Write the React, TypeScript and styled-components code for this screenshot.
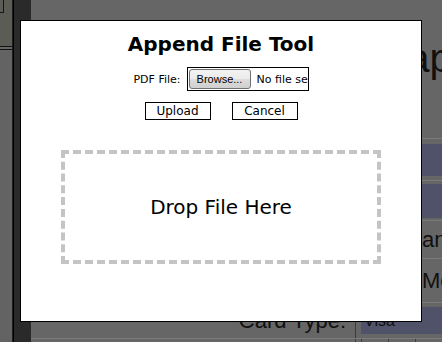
import React from "react";
import styled, { createGlobalStyle } from "styled-components";

// Style
const GlobalStyle = createGlobalStyle`
  html, body {
    margin: 0;
    padding: 0;
    width: 100%;
    height: 100%;
    overflow: hidden;
    background-color: #666666;
  }
  #root {
    height: 100%;
  }
`;

const Page = styled.div`
  display: flex;
  height: 100vh;
  overflow: hidden;
`;

const LeftPanel = styled.div`
  width: 12px;
  display: flex;
  flex-direction: column;
  border-right: 1px solid #1e1e1e;
  flex-shrink: 0;
`;

const PanelTop = styled.div`
  height: 46px;
  background-color: #5c5c57;
  border-bottom: 1px solid #111111;
`;

const PanelTab = styled.div`
  width: 3px;
  height: 12px;
  border-right: 1px solid #151515;
  border-bottom: 1px solid #151515;
`;

const PanelBottom = styled.div`
  flex: 1;
  margin-top: 2px;
  background-color: #636363;
  border-top: 1px solid #111111;
`;

const SideBar = styled.div`
  width: 17px;
  flex-shrink: 0;
  background-color: #2a2a2a;
  border-left: 1px solid #000000;
`;

const Main = styled.div`
  flex: 1;
  min-width: 0;
  overflow: hidden;
  padding-top: 36px;
  font-family: "Liberation Sans", Arial, sans-serif;
  color: #111111;
`;

const Heading = styled.h1`
  margin: 0;
  padding-left: 305px;
  height: 46px;
  font-size: 40px;
  font-weight: normal;
  white-space: nowrap;
`;

const Form = styled.div`
  margin-top: 56px;
`;

const Row = styled.div<{ $h: number }>`
  display: grid;
  grid-template-columns: 324px 1fr;
  height: ${(p) => p.$h}px;
  border-top: 1px solid #7a7a7a;
  box-sizing: border-box;
`;

const Label = styled.div`
  display: flex;
  align-items: center;
  justify-content: flex-end;
  padding-right: 9px;
  font-size: 22px;
  white-space: nowrap;
`;

const Cell = styled.div`
  display: flex;
  align-items: center;
  padding-left: 5px;
  border-left: 1px solid #3c3c3c;
  white-space: nowrap;
  overflow: hidden;
`;

const Field = styled.div<{ $h: number }>`
  flex: 1;
  height: ${(p) => p.$h}px;
  background-color: #50526a;
  font-size: 16px;
  padding-left: 3px;
  display: flex;
  align-items: center;
`;

const Note = styled.span`
  padding-left: 61px;
  font-size: 22px;
`;

const MiniBox = styled.div`
  width: 26px;
  height: 100%;
  border-left: 1px solid #3c3c3c;
`;

const Overlay = styled.div`
  position: fixed;
  inset: 0;
  display: flex;
  align-items: center;
  justify-content: center;
`;

const Dialog = styled.div`
  width: 400px;
  height: 300px;
  background-color: #ffffff;
  border: 1px solid #000000;
  display: flex;
  flex-direction: column;
  align-items: center;
  font-family: "DejaVu Sans", Verdana, sans-serif;
  color: #000000;
`;

const Title = styled.h2`
  margin: 12px 0 0;
  font-size: 20px;
  line-height: 23px;
  font-weight: bold;
`;

const FileRow = styled.div`
  margin-top: 11px;
  display: flex;
  align-items: center;
  gap: 6px;
  font-size: 11px;
`;

const FileBox = styled.div`
  width: 122px;
  height: 24px;
  box-sizing: border-box;
  border: 1px solid #000000;
  padding: 1px;
  display: flex;
  align-items: center;
  gap: 6px;
  overflow: hidden;
  white-space: nowrap;
`;

const Browse = styled.div`
  flex-shrink: 0;
  width: 62px;
  height: 20px;
  box-sizing: border-box;
  border: 1px solid #707070;
  border-radius: 3px;
  background: linear-gradient(#f2f2f2, #ebebeb 50%, #dddddd 50%, #cfcfcf);
  font-family: "Liberation Sans", Arial, sans-serif;
  font-size: 11px;
  display: flex;
  align-items: center;
  justify-content: center;
`;

const ButtonRow = styled.div`
  margin-top: 11px;
  display: flex;
  gap: 21px;
`;

const Button = styled.button`
  width: 66px;
  height: 18px;
  padding: 0;
  border: 1px solid #000000;
  background-color: #ffffff;
  font-family: "DejaVu Sans", Verdana, sans-serif;
  font-size: 12px;
  line-height: 16px;
  color: #000000;
`;

const DropZone = styled.div`
  margin-top: 30px;
  width: 320px;
  height: 114px;
  box-sizing: border-box;
  border: 4px dashed #c4c4c4;
  display: flex;
  align-items: center;
  justify-content: center;
  font-size: 20px;
`;

function App() {
  return (
    <>
      <GlobalStyle />
      <Page>
        <LeftPanel>
          <PanelTop>
            <PanelTab />
          </PanelTop>
          <PanelBottom />
        </LeftPanel>
        <SideBar />
        <Main>
          <Heading>Recap</Heading>
          <Form>
            <Row $h={42}>
              <Label />
              <Cell>
                <Field $h={32} />
              </Cell>
            </Row>
            <Row $h={40}>
              <Label />
              <Cell>
                <Field $h={34} />
              </Cell>
            </Row>
            <Row $h={38}>
              <Label />
              <Cell>
                <Note>annual</Note>
              </Cell>
            </Row>
            <Row $h={44}>
              <Label />
              <Cell>
                <Note>Monthly</Note>
              </Cell>
            </Row>
            <Row $h={36}>
              <Label>Card Type:</Label>
              <Cell>
                <Field $h={27}>Visa</Field>
              </Cell>
            </Row>
            <Row $h={4}>
              <Label />
              <Cell>
                <MiniBox />
                <MiniBox />
                <MiniBox />
              </Cell>
            </Row>
          </Form>
        </Main>
      </Page>
      <Overlay>
        <Dialog>
          <Title>Append File Tool</Title>
          <FileRow>
            <span>PDF File:</span>
            <FileBox>
              <Browse>Browse...</Browse>
              <span>No file selected.</span>
            </FileBox>
          </FileRow>
          <ButtonRow>
            <Button>Upload</Button>
            <Button>Cancel</Button>
          </ButtonRow>
          <DropZone>Drop File Here</DropZone>
        </Dialog>
      </Overlay>
    </>
  );
}

export default App;
